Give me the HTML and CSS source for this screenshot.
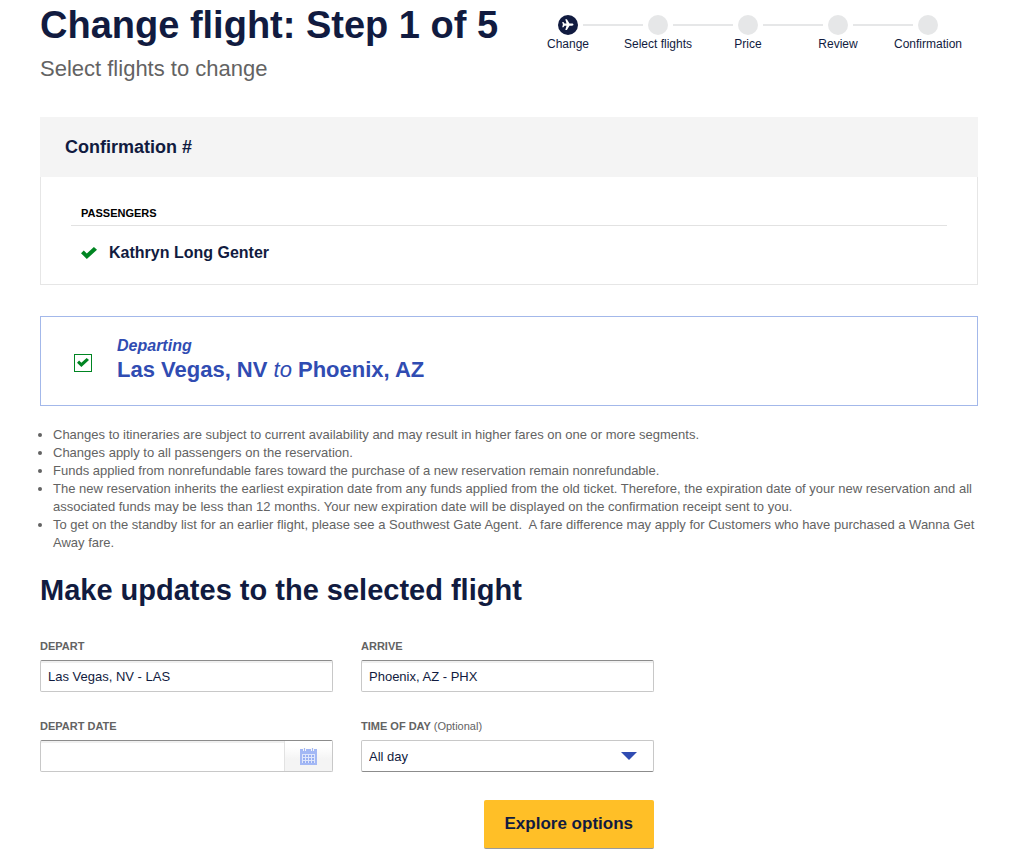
FILE: index.html
```html
<!DOCTYPE html>
<html lang="en">
<head>
  <meta charset="UTF-8">
  <meta name="viewport" content="width=device-width, initial-scale=1.0">
  <title>Change flight</title>
  <link rel="stylesheet" href="styles.css">
</head>
<body>
  <main class="page">
    <header class="page-header">
      <div>
        <h1>Change flight: Step 1 of 5</h1>
        <p class="subtitle">Select flights to change</p>
      </div>
      <ol class="steps">
        <li class="step active" aria-current="step">
          <span class="marker"><span class="dot">
            <svg viewBox="0 0 20 20" width="20" height="20" aria-hidden="true">
              <path d="M15.5 9.6c0-.8-.8-1.2-1.6-1.2h-2.4L8.9 4.2H7.3l1.2 4.2H6.5L5.4 6.9H4.2l.7 2.7-.7 2.7h1.2l1.1-1.5h2L7.3 15h1.6l2.6-4.2h2.4c.8 0 1.6-.4 1.6-1.2z" fill="#fff"/>
            </svg>
          </span></span>
          Change
        </li>
        <li class="step"><span class="marker"><span class="dot"></span></span>Select flights</li>
        <li class="step"><span class="marker"><span class="dot"></span></span>Price</li>
        <li class="step"><span class="marker"><span class="dot"></span></span>Review</li>
        <li class="step"><span class="marker"><span class="dot"></span></span>Confirmation</li>
      </ol>
    </header>

    <section class="reservation">
      <h2 class="reservation-title">Confirmation #</h2>
      <div class="reservation-body">
        <h3 class="passengers-title">PASSENGERS</h3>
        <p class="passenger">
          <svg viewBox="0 0 16 12" width="16" height="12" aria-hidden="true">
            <path d="M0 6.2 2.8 3.4l3 3L12.9 0 16 2.8 5.8 12z" fill="#008522"/>
          </svg>
          Kathryn Long Genter
        </p>
      </div>
    </section>

    <section class="flight">
      <input type="checkbox" id="flight-departing" class="flight-check" checked>
      <label for="flight-departing" class="flight-label">
        <span class="flight-direction">Departing</span>
        <span class="flight-route">Las Vegas, NV <em>to</em> Phoenix, AZ</span>
      </label>
    </section>

    <ul class="notes">
      <li>Changes to itineraries are subject to current availability and may result in higher fares on one or more segments.</li>
      <li>Changes apply to all passengers on the reservation.</li>
      <li>Funds applied from nonrefundable fares toward the purchase of a new reservation remain nonrefundable.</li>
      <li>The new reservation inherits the earliest expiration date from any funds applied from the old ticket. Therefore, the expiration date of your new reservation and all associated funds may be less than 12 months. Your new expiration date will be displayed on the confirmation receipt sent to you.</li>
      <li>To get on the standby list for an earlier flight, please see a Southwest Gate Agent.&nbsp; A fare difference may apply for Customers who have purchased a Wanna Get Away fare.</li>
    </ul>

    <h2 class="form-title">Make updates to the selected flight</h2>

    <form class="update-form">
      <div class="field">
        <label for="depart">DEPART</label>
        <input type="text" id="depart" class="control" value="Las Vegas, NV - LAS">
      </div>
      <div class="field">
        <label for="arrive">ARRIVE</label>
        <input type="text" id="arrive" class="control" value="Phoenix, AZ - PHX">
      </div>
      <div class="field">
        <label for="depart-date">DEPART DATE</label>
        <div class="control date-control">
          <input type="text" id="depart-date" class="date-input">
          <button type="button" class="date-button" aria-label="Open calendar">
            <svg viewBox="0 0 17 17" width="17" height="17" aria-hidden="true">
              <path d="M0 1h17v16H0z" fill="#a3b8f5"/>
              <path d="M2 6h13v9H2z" fill="#dfe6fb"/>
              <path d="M3 7h2v2H3zM6 7h2v2H6zM9 7h2v2H9zM12 7h2v2h-2zM3 10h2v2H3zM6 10h2v2H6zM9 10h2v2H9zM12 10h2v2h-2zM3 13h2v2H3zM6 13h2v2H6zM9 13h2v2H9zM12 13h2v2h-2z" fill="#98aff2"/>
              <path d="M3 0h3v3H3zM11 0h3v3h-3z" fill="#f7f7f7"/>
              <path d="M4 0h1v3H4zM12 0h1v3h-1z" fill="#a3b8f5"/>
            </svg>
          </button>
        </div>
      </div>
      <div class="field">
        <label for="time-of-day">TIME OF DAY <span class="optional">(Optional)</span></label>
        <select id="time-of-day" class="control select-control">
          <option>All day</option>
          <option>Before noon</option>
          <option>Noon - 6pm</option>
          <option>After 6pm</option>
        </select>
      </div>
      <button type="submit" class="submit-button">Explore options</button>
    </form>
  </main>
</body>
</html>
```
FILE: styles.css
```css
* {
  box-sizing: border-box;
}

body {
  margin: 0;
  background: #fff;
  color: #111b40;
  font-family: "Liberation Sans", Arial, sans-serif;
}

h1, h2, h3, p, ul, ol {
  margin: 0;
  padding: 0;
}

.page {
  padding: 0 42px 8px 40px;
}

.page-header {
  display: flex;
  justify-content: space-between;
  align-items: flex-start;
}

h1 {
  padding-top: 2px;
  font-size: 38px;
  line-height: 46px;
}

.subtitle {
  padding-top: 8px;
  font-size: 22px;
  line-height: 26px;
  color: #636363;
}

/* Progress steps */
.steps {
  display: grid;
  grid-template-columns: repeat(5, 90px);
  padding: 15px 5px 0 0;
  list-style: none;
}

.step {
  font-size: 12px;
  line-height: 18px;
  text-align: center;
}

.marker {
  display: flex;
  align-items: center;
  gap: 5px;
}

.marker::before,
.marker::after {
  content: "";
  flex: 1;
  height: 2px;
  background: #e6e7e8;
}

.step:first-child .marker::before,
.step:last-child .marker::after {
  background: none;
}

.dot {
  width: 20px;
  height: 20px;
  border-radius: 50%;
  background: #e6e7e8;
}

.active .dot {
  background: #111b40;
}

.dot svg {
  display: block;
}

/* Reservation */
.reservation {
  margin-top: 35px;
}

.reservation-title {
  padding: 18px 25px;
  background: #f4f4f4;
  font-size: 18px;
  line-height: 24px;
}

.reservation-body {
  padding: 28px 30px 19px;
  border: 1px solid #e6e6e6;
  border-top: 0;
}

.passengers-title {
  padding: 0 10px 4px;
  border-bottom: 1px solid #e2e2e2;
  color: #000;
  font-size: 11px;
  line-height: 16px;
}

.passenger {
  display: flex;
  align-items: center;
  gap: 12px;
  padding: 15px 10px 0;
  font-size: 16px;
  font-weight: bold;
  line-height: 24px;
}

/* Selected flight */
.flight {
  display: flex;
  align-items: center;
  gap: 25px;
  margin-top: 31px;
  padding: 18px 33px 21px;
  border: 1px solid #a3b8ea;
  color: #304cb2;
}

.flight-check {
  appearance: none;
  width: 18px;
  height: 18px;
  margin: 6px 0 0;
  border: 1px solid #008522;
  background: #fff;
}

.flight-check:checked {
  background: url("data:image/svg+xml,%3Csvg xmlns='http://www.w3.org/2000/svg' viewBox='0 0 16 12'%3E%3Cpath d='M0 6.2 2.8 3.4l3 3L12.9 0 16 2.8 5.8 12z' fill='%23008522'/%3E%3C/svg%3E") center / 12px 9px no-repeat;
}

.flight-label {
  display: flex;
  flex-direction: column;
}

.flight-direction {
  font-size: 16px;
  font-style: italic;
  font-weight: bold;
  line-height: 21px;
}

.flight-route {
  font-size: 22px;
  font-weight: bold;
  line-height: 28px;
}

.flight-route em {
  font-weight: normal;
}

.notes {
  margin-top: 20px;
  padding-left: 13px;
  color: #636363;
  font-size: 13px;
  line-height: 18px;
}

/* Update form */
.form-title {
  margin-top: 20px;
  font-size: 29px;
  line-height: 36px;
}

.update-form {
  display: grid;
  grid-template-columns: 1fr 1fr;
  gap: 26px 28px;
  max-width: 614px;
  margin-top: 30px;
}

.field label {
  display: block;
  padding-bottom: 6px;
  color: #636363;
  font-size: 11px;
  font-weight: bold;
  line-height: 16px;
}

.field .optional {
  font-weight: normal;
}

.control {
  display: block;
  width: 100%;
  height: 32px;
  padding: 0 7px;
  border: 1px solid #c8c8c8;
  border-top-color: #8c8c8c;
  border-radius: 2px;
  background: #fff;
  box-shadow: inset 0 2px 0 #f0f0f0;
  color: #111b40;
  font-family: inherit;
  font-size: 13px;
}

.date-control {
  display: flex;
  padding: 0;
}

.date-input {
  flex: 1;
  min-width: 0;
  padding: 0 7px;
  border: 0;
  background: none;
  font: inherit;
}

.date-button {
  display: flex;
  align-items: center;
  justify-content: center;
  width: 48px;
  padding: 0;
  border: 0;
  border-left: 1px solid #e2e2e2;
  background: linear-gradient(#fff 20%, #f4f4f4 60%);
  cursor: pointer;
}

.select-control {
  appearance: none;
  border-color: #c8c8c8;
  border-bottom-color: #8c8c8c;
  background: #fff url("data:image/svg+xml,%3Csvg xmlns='http://www.w3.org/2000/svg' viewBox='0 0 16 8'%3E%3Cpath d='M0 0h16L8 8z' fill='%23304cb2'/%3E%3C/svg%3E") right 16px center / 16px 8px no-repeat;
  box-shadow: none;
}

.submit-button {
  grid-column: 2;
  justify-self: end;
  margin-top: 2px;
  padding: 0 21px;
  border: 0;
  border-bottom: 1px solid #9a9a9a;
  border-radius: 2px;
  background: #ffbf27;
  color: #111b40;
  font-family: inherit;
  font-size: 17px;
  font-weight: bold;
  line-height: 48px;
  cursor: pointer;
}
```
